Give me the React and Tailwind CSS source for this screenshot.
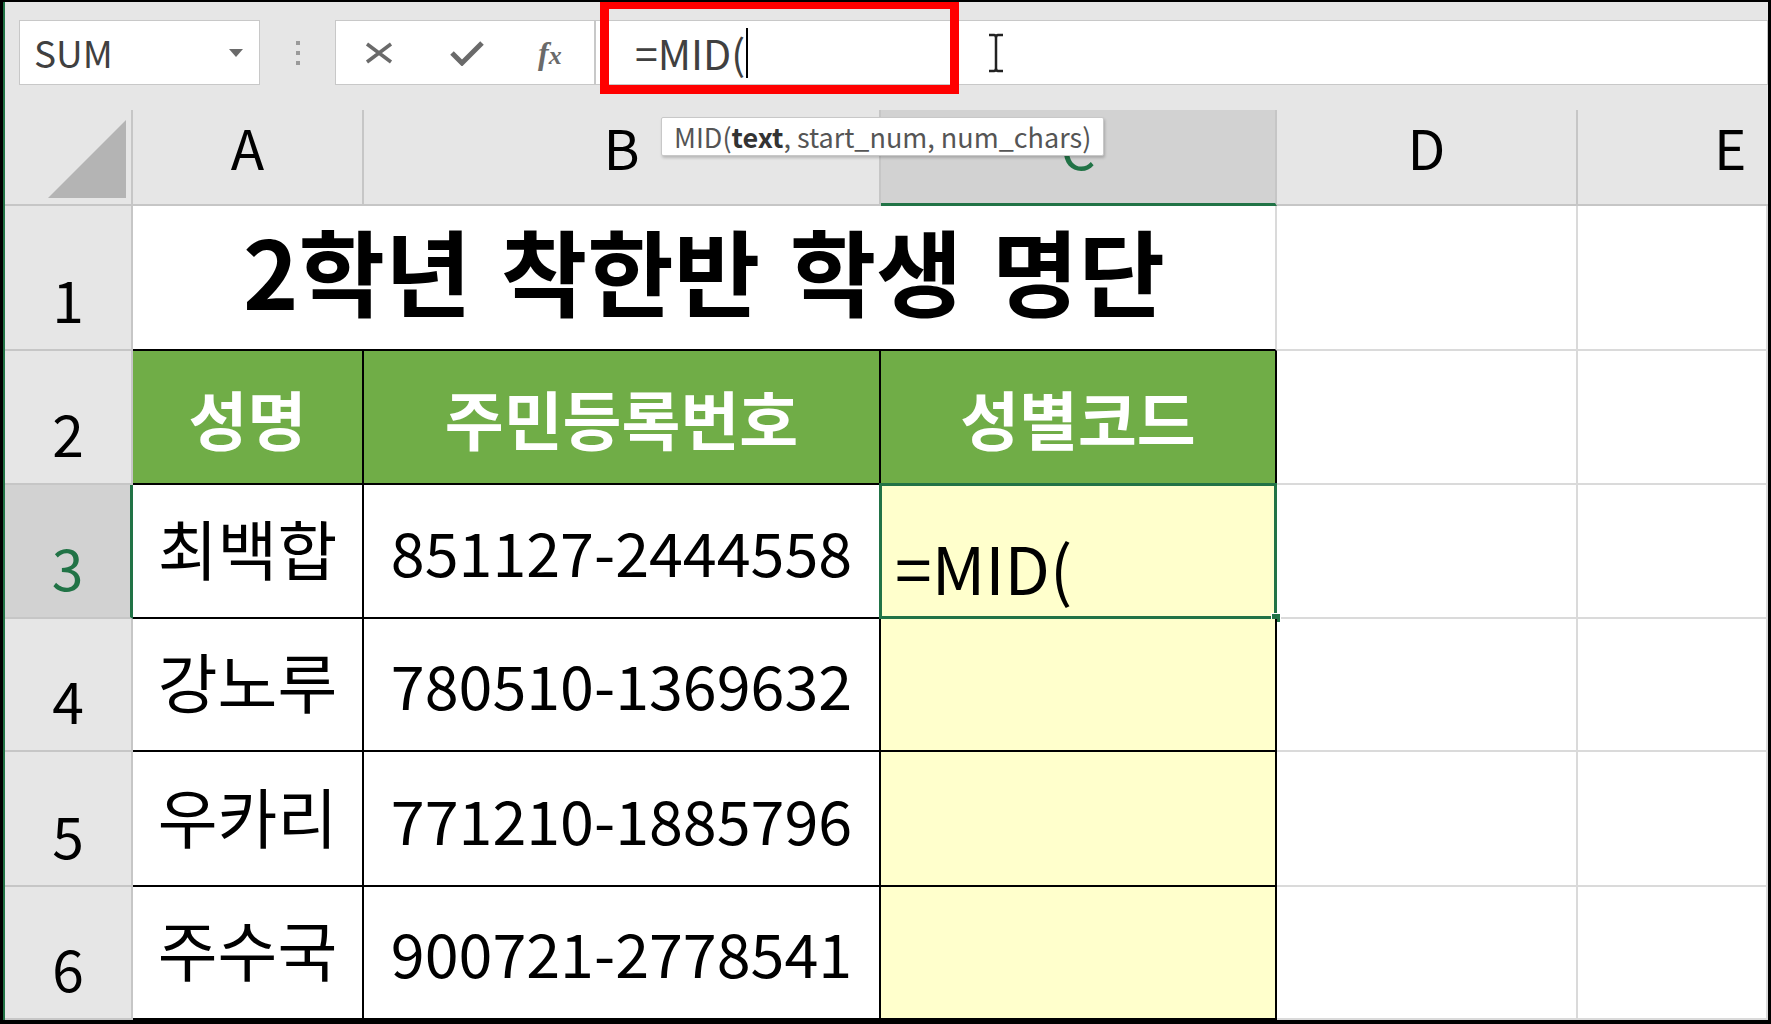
const FONT = "font-['Noto_Sans_CJK_KR','Open_Sans',sans-serif]";

const colHeads = [
  { label: 'A' },
  { label: 'B' },
  { label: 'C', selected: true },
  { label: 'D' },
  { label: 'E', edge: true },
];

const people = [
  { name: '최백합', id: '851127-2444558', code: '=MID(' },
  { name: '강노루', id: '780510-1369632', code: '' },
  { name: '우카리', id: '771210-1885796', code: '' },
  { name: '주수국', id: '900721-2778541', code: '' },
];

const ColHead = ({ label, selected, edge }) => {
  if (selected) {
    return (
      <div className="flex items-start justify-center pt-[9px] bg-[#d2d2d2] border-r-2 border-[#c6c6c6] border-b-[3px] border-b-[#217346] text-[#217346] text-[55px] leading-none">
        {label}
      </div>
    );
  }
  return (
    <div
      className={
        edge
          ? 'flex items-start justify-start pl-[136px] pt-[9px] bg-[#e6e6e6] border-b-2 border-[#c6c6c6] text-black text-[55px] leading-none'
          : 'flex items-start justify-center pt-[9px] bg-[#e6e6e6] border-r-2 border-b-2 border-[#c6c6c6] text-black text-[55px] leading-none'
      }
    >
      {label}
    </div>
  );
};

const RowHead = ({ n, selected }) => (
  <div
    className={
      selected
        ? 'flex items-end justify-center pb-[22px] bg-[#d2d2d2] border-b-2 border-[#c6c6c6] border-r-[3px] border-r-[#217346] text-[#217346] text-[57px] leading-none'
        : 'flex items-end justify-center pb-[22px] bg-[#e6e6e6] border-r-2 border-b-2 border-[#c6c6c6] text-black text-[57px] leading-none'
    }
  >
    {n}
  </div>
);

const Blank = () => <div className="bg-white border-r-2 border-b-2 border-[#dadada]" />;

export default function App() {
  return (
    <div
      className={`${FONT} relative w-[1771px] h-[1024px] overflow-hidden bg-[#e6e6e6] border-t-2 border-l-[3px] border-r-[3px] border-b-4 border-black`}
    >
      <div className="flex flex-col h-full border-l-2 border-[#217346]">
        {/* formula bar */}
        <div className="flex items-start h-[108px] pt-[18px] pl-[14px] shrink-0">
          <div className="flex items-center justify-between w-[241px] h-[65px] bg-white border border-[#c8c8c8] pl-[14px] pr-4">
            <span className="text-[37px] leading-none text-[#404040]">SUM</span>
            <svg width="14" height="8" viewBox="0 0 14 8">
              <path d="M0 0 H14 L7 8 Z" fill="#6a6a6a" />
            </svg>
          </div>
          <div className="flex flex-col items-center justify-center gap-[6px] w-[75px] h-[65px]">
            <span className="w-[4px] h-[4px] bg-[#9a9a9a]" />
            <span className="w-[4px] h-[4px] bg-[#9a9a9a]" />
            <span className="w-[4px] h-[4px] bg-[#9a9a9a]" />
          </div>
          <div className="flex items-center w-[260px] h-[65px] bg-white border border-[#c8c8c8]">
            <svg className="ml-[29px]" width="28" height="22" viewBox="0 0 28 22">
              <path d="M2 2 L26 20 M26 2 L2 20" stroke="#6a6a6a" strokeWidth="3.5" />
            </svg>
            <svg className="ml-[57px]" width="34" height="26" viewBox="0 0 34 26">
              <path d="M2 13 L12 23 L32 3" stroke="#6a6a6a" strokeWidth="5" fill="none" />
            </svg>
            <span className="ml-[54px] font-['Liberation_Serif',serif] italic font-bold text-[32px] leading-none text-[#6a6a6a]">
              f<span className="text-[26px]">x</span>
            </span>
          </div>
          <div className="flex items-center flex-1 h-[65px] bg-white border border-[#c8c8c8] pl-[39px]">
            <span className="text-[41px] leading-none text-[#404040]">=MID(</span>
            <span className="w-[2px] h-[50px] bg-black ml-[1px]" />
            <svg className="ml-[238px]" width="20" height="40" viewBox="0 0 20 40">
              <path d="M3 2 H8 Q10 2 10 5 V35 Q10 38 8 38 H3 M17 2 H12 Q10 2 10 5 M10 35 Q10 38 12 38 H17" stroke="#222" strokeWidth="2.5" fill="none" />
            </svg>
          </div>
        </div>

        {/* sheet grid */}
        <div className="grid grid-cols-[128px_231px_517px_396px_301px_1fr] grid-rows-[96px_145px_134px_134px_133px_135px_133px]">
          <div className="relative bg-[#e6e6e6] border-r-2 border-b-2 border-[#c6c6c6]">
            <svg className="absolute right-[5px] bottom-[6px]" width="78" height="78" viewBox="0 0 78 78">
              <polygon points="78,0 78,78 0,78" fill="#b4b4b4" />
            </svg>
          </div>
          {colHeads.map((c) => (
            <ColHead key={c.label} {...c} />
          ))}

          {/* row 1 */}
          <RowHead n="1" />
          <div className="col-span-3 flex items-end justify-center pb-[33px] bg-white border-r-2 border-r-[#dadada] border-b-2 border-b-black">
            <span className="text-[94px] leading-none font-bold text-black [word-spacing:8px]">
              2학년 착한반 학생 명단
            </span>
          </div>
          <Blank />
          <Blank />

          {/* row 2 */}
          <RowHead n="2" />
          {['성명', '주민등록번호', '성별코드'].map((h) => (
            <div
              key={h}
              className="flex items-center justify-center bg-[#70ad47] border-r-2 border-b-2 border-black text-white font-bold text-[64px] leading-none"
            >
              {h}
            </div>
          ))}
          <Blank />
          <Blank />

          {/* data rows */}
          {people.map((p, i) => (
            <div key={p.id} className="contents">
              <RowHead n={String(i + 3)} selected={i === 0} />
              <div className="flex items-end justify-center pb-[37px] bg-white border-r-2 border-b-2 border-black text-black text-[65px] leading-none">
                {p.name}
              </div>
              <div className="flex items-end justify-center pb-[36px] bg-white border-r-2 border-b-2 border-black text-black text-[61px] leading-none">
                {p.id}
              </div>
              <div className="relative flex items-end pl-[14px] pb-[18px] bg-[#ffffcc] border-r-2 border-b-2 border-black text-black text-[66px] leading-none">
                {p.code}
                {i === 0 && (
                  <>
                    <div className="absolute -left-[2px] -top-[2px] -right-[2px] -bottom-[2px] border-[3px] border-[#217346]" />
                    <div className="absolute -right-[6px] -bottom-[6px] w-[10px] h-[10px] bg-[#217346] border border-white" />
                  </>
                )}
              </div>
              <Blank />
              <Blank />
            </div>
          ))}
        </div>
      </div>

      {/* function argument tooltip */}
      <div className="absolute left-[658px] top-[115px] flex items-center h-[39px] px-3 bg-white border border-[#c8c8c8] rounded-[2px] shadow-[1px_2px_3px_rgba(0,0,0,0.2)] text-[27px] leading-none text-[#555] whitespace-nowrap">
        MID(<b className="font-bold text-[#333]">text</b>, start_num, num_chars)
      </div>

      {/* red annotation box */}
      <div className="absolute left-[597px] -top-[2px] w-[359px] h-[94px] border-[9px] border-[#ff0000]" />
    </div>
  );
}
